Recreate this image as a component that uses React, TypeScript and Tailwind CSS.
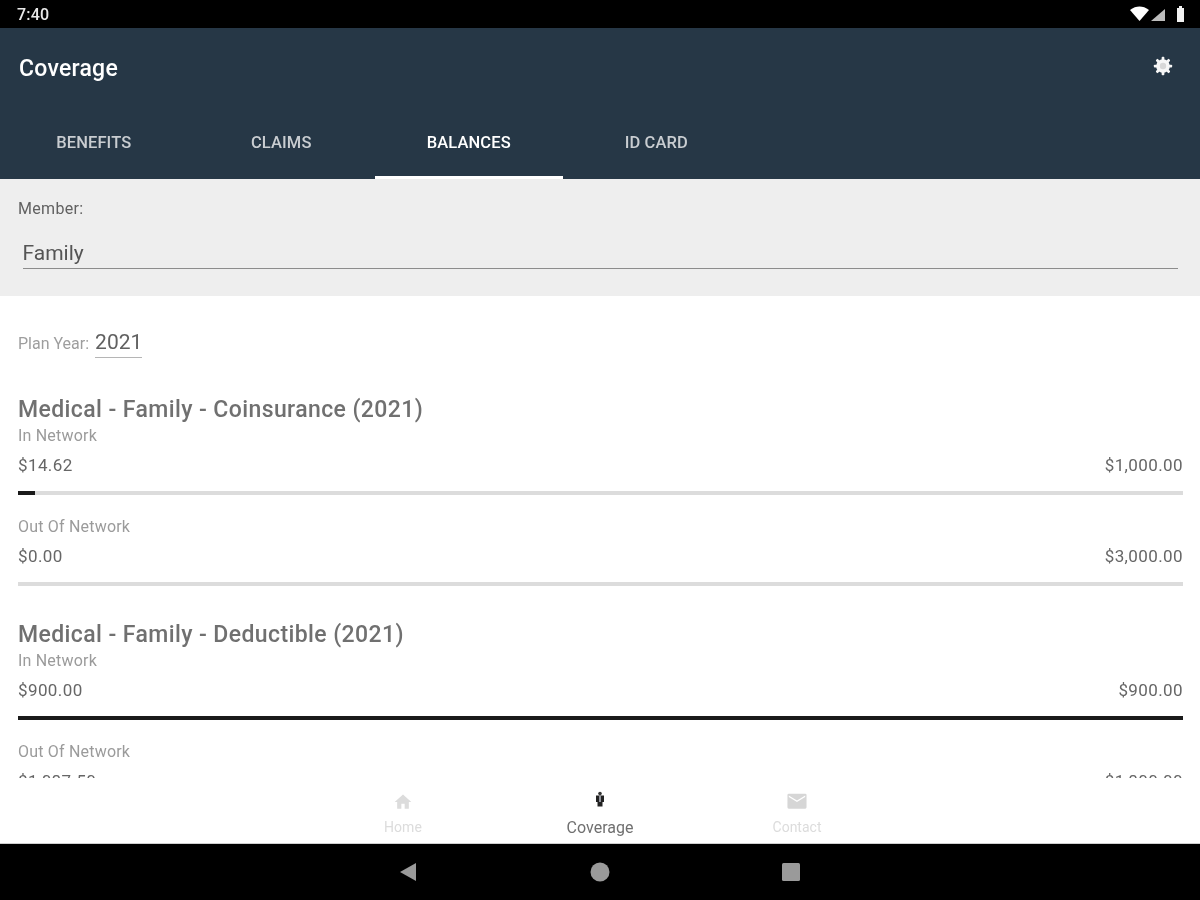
import React from "react";

function Row({ label, left, right, pct }: { label: string; left: string; right: string; pct: number }) {
  return (
    <div>
      <div className="pt-px text-[16px] leading-[20px] tracking-[0.2px] text-[#9b9b9b]">{label}</div>
      <div className="mt-[9px] flex justify-between text-[17px] leading-[20px] tracking-[0.4px] text-[#666666]">
        <span>{left}</span>
        <span>{right}</span>
      </div>
      <div className="mt-[16px] h-[4px] w-full bg-[#dcdcdc]">
        <div className="h-full bg-[#1a1a1a]" style={{ width: `${pct}%` }} />
      </div>
    </div>
  );
}

function Section({ title, rows }: { title: string; rows: { label: string; left: string; right: string; pct: number }[] }) {
  return (
    <div className="flex flex-col">
      <div className="text-[23px] leading-[28px] font-medium tracking-[0.4px] text-[#707070]">{title}</div>
      <div className="mt-px flex flex-col gap-[21px]">
        {rows.map((r) => (
          <Row key={r.label} {...r} />
        ))}
      </div>
    </div>
  );
}

export default function App() {
  return (
    <div className="flex h-[900px] w-[1200px] flex-col overflow-hidden bg-white font-['Roboto',sans-serif] blur-[0.5px]">
      <div className="flex h-[28px] items-center justify-between bg-black pl-[17px] pr-[16px]">
        <span className="mt-[2px] text-[16px] font-medium tracking-[0.2px] text-[#e8e8e8]">7:40</span>
        <svg width="54" height="18" viewBox="0 0 54 18">
          <path d="M0 5C3 2.500 6.500 1.500 9.500 1.500S16 2.500 19 5L9.500 16z" fill="#fff" />
          <path d="M35 4v12H21z" fill="#bdbdbd" />
          <path d="M47 3h2V1h3v2h2v14h-7z" fill="#f2f2f2" />
        </svg>
      </div>

      <div className="flex h-[151px] flex-col bg-[#263746]">
        <div className="flex h-[79px] items-center justify-between pl-[19px] pr-[26px]">
          <span className="mt-[3px] text-[23px] font-medium tracking-[0.25px] text-white">Coverage</span>
          <svg width="22" height="22" viewBox="0 0 24 24" className="mt-[-3px]">
            <g fill="#f7f7f7">
              <circle cx="12" cy="12" r="7.500" />
              <rect x="10.500" y="2" width="3" height="20" rx="1" />
              <rect x="10.500" y="2" width="3" height="20" rx="1" transform="rotate(45 12 12)" />
              <rect x="10.500" y="2" width="3" height="20" rx="1" transform="rotate(90 12 12)" />
              <rect x="10.500" y="2" width="3" height="20" rx="1" transform="rotate(135 12 12)" />
            </g>
            <circle cx="12" cy="12" r="3.500" fill="#d8d8d8" />
          </svg>
        </div>
        <div className="flex flex-1">
          {[
            ["BENEFITS", false],
            ["CLAIMS", false],
            ["BALANCES", true],
            ["ID CARD", false],
          ].map(([t, active]) => (
            <div
              key={t as string}
              className={
                active
                  ? "flex w-[187.5px] items-center justify-center border-b-[3px] border-white pt-[3px] text-[16.5px] font-medium tracking-[0.1px] text-white"
                  : "flex w-[187.5px] items-center justify-center border-b-[3px] border-transparent pt-[3px] text-[16.5px] font-medium tracking-[0.1px] text-[#c9cdd1]"
              }
            >
              {t}
            </div>
          ))}
        </div>
      </div>

      <div className="flex h-[117px] flex-col bg-[#eeeeee] px-[18px] pt-[20px]">
        <div className="text-[16px] leading-[20px] tracking-[0.3px] text-[#616161]">Member:</div>
        <div className="ml-[4.500px] mr-[4.500px] mt-[20px] border-b-[1.5px] border-[#8c8c8c] pb-px text-[21px] leading-[28px] text-[#555555]">
          Family
        </div>
      </div>

      <div className="flex flex-1 flex-col overflow-hidden pl-[18px] pr-[17px] pt-[32px]">
        <div className="flex items-start">
          <span className="mt-[6px] text-[16px] leading-[20px] text-[#9e9e9e]">Plan Year:</span>
          <span className="ml-[6px] w-[47px] border-b border-[#b5b5b5] pb-px text-[21px] leading-[28px] text-[#616161]">
            2021
          </span>
        </div>
        <div className="mt-[38px] flex flex-col gap-[34.5px]">
          <Section
            title="Medical - Family - Coinsurance (2021)"
            rows={[
              { label: "In Network", left: "$14.62", right: "$1,000.00", pct: 1.5 },
              { label: "Out Of Network", left: "$0.00", right: "$3,000.00", pct: 0 },
            ]}
          />
          <Section
            title="Medical - Family - Deductible (2021)"
            rows={[
              { label: "In Network", left: "$900.00", right: "$900.00", pct: 100 },
              { label: "Out Of Network", left: "$1,087.50", right: "$1,800.00", pct: 60 },
            ]}
          />
        </div>
      </div>

      <div className="flex h-[66px] shrink-0 justify-center border-b border-[#cfcfcf] bg-white">
        <div className="flex w-[197px] flex-col items-center pt-[14px] text-[#dcdcdc]">
          <svg width="20" height="20" viewBox="0 0 24 24">
            <path fill="#dcdcdc" d="M10 20v-6h4v6h5v-8h3L12 3 2 12h3v8z" />
          </svg>
          <span className="mt-[6px] text-[14px] leading-[18px] tracking-[0.1px]">Home</span>
        </div>
        <div className="flex w-[197px] flex-col items-center pt-[13px] text-[#707070]">
          <svg width="20" height="20" viewBox="0 0 20 20">
            <circle cx="10" cy="2.500" r="1.800" fill="#333" />
            <path d="M6 4.500h8v6.500h-1.500v4.500h-5V11H6z" fill="#222" />
            <path d="M10 5v6" stroke="#dfe3f0" strokeWidth="1.200" />
          </svg>
          <span className="mt-[7px] text-[16px] leading-[20px]">Coverage</span>
        </div>
        <div className="flex w-[197px] flex-col items-center pt-[13px] text-[#dcdcdc]">
          <svg width="22" height="20" viewBox="0 0 24 22">
            <path
              fill="#d6d6d6"
              d="M3 3h18a1.500 1.500 0 0 1 1.500 1.500V18a1.500 1.500 0 0 1-1.500 1.500H3A1.500 1.500 0 0 1 1.500 18V4.500A1.500 1.500 0 0 1 3 3zm0 3.500 9 5.500 9-5.500V5l-9 5.500L3 5z"
            />
          </svg>
          <span className="mt-[7px] text-[14px] leading-[18px]">Contact</span>
        </div>
      </div>

      <div className="flex h-[56px] shrink-0 items-center justify-center gap-[171px] bg-black">
        <svg width="20" height="20" viewBox="0 0 20 20">
          <path d="M17 1v18L1 10z" fill="#9a9a9a" />
        </svg>
        <svg width="20" height="20" viewBox="0 0 20 20">
          <circle cx="10" cy="10" r="9.500" fill="#9a9a9a" />
        </svg>
        <svg width="20" height="20" viewBox="0 0 20 20">
          <rect x="1" y="1" width="18" height="18" rx="1.500" fill="#9a9a9a" />
        </svg>
      </div>
    </div>
  );
}
